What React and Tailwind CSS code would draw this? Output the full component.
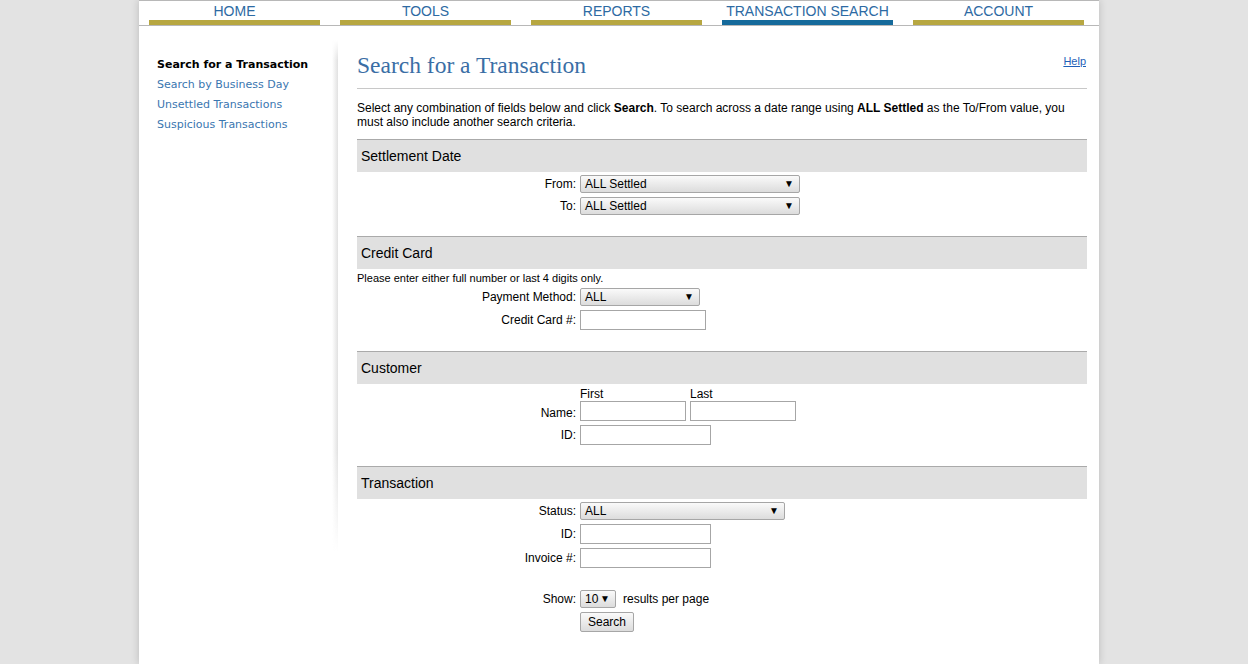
import React from 'react'

const navItems = ['HOME', 'TOOLS', 'REPORTS', 'TRANSACTION SEARCH', 'ACCOUNT']
const sideLinks = ['Search by Business Day', 'Unsettled Transactions', 'Suspicious Transactions']

function Select({ value, width }) {
  return (
    <div className={`${width} h-[18px] border border-[#a6a6a6] rounded-[2px] bg-gradient-to-b from-[#fafafa] to-[#dcdcdc] flex items-center justify-between pl-[4px] pr-[5px] text-[12px] text-black`}>
      <span>{value}</span>
      <span className="text-[10px] leading-none">▼</span>
    </div>
  )
}

function Input({ width }) {
  return <div className={`${width} h-[20px] border border-[#a6a6a6] bg-white`} />
}

function Row({ label, children }) {
  return (
    <div className="flex items-center">
      <div className="w-[223px] pr-[4px] text-right text-[12px] text-black">{label}</div>
      {children}
    </div>
  )
}

function SectionHead({ title }) {
  return (
    <div className="border-t border-[#aaaaaa] bg-[#e0e0e0] h-[33px] flex items-center pl-[4px] text-[14px] text-black">
      {title}
    </div>
  )
}

export default function App() {
  return (
    <div className="min-h-screen bg-[#e3e3e3] flex justify-center pr-[10px] font-['Liberation_Sans',Arial,sans-serif]">
      <div className="w-[960px] min-h-[664px] bg-white border-t border-[#b8b8b8] shadow-[0_0_8px_rgba(0,0,0,0.18)]">
        {/* top nav */}
        <div className="flex gap-[20px] pl-[10px] border-b border-[#b8b8b8]">
          {navItems.map((item) => (
            <div
              key={item}
              className={`w-[171px] h-[24px] pt-[1px] text-center text-[14px] leading-[18px] text-[#2d6aa3] border-b-[5px] ${item === 'TRANSACTION SEARCH' ? 'border-[#156a9b]' : 'border-[#b7a741]'}`}
            >
              {item}
            </div>
          ))}
        </div>

        <div className="flex">
          {/* sidebar */}
          <div className="w-[199px] flex">
            <div className="flex-1 pl-[18px] pt-[29px] font-['DejaVu_Sans',Verdana,sans-serif] text-[11px] leading-[20px]">
              <div className="font-bold text-black">Search for a Transaction</div>
              {sideLinks.map((l) => (
                <div key={l} className="text-[#3a76b0]">{l}</div>
              ))}
            </div>
            <div className="w-[6px] h-[512px] mt-[14px] bg-[linear-gradient(to_right,rgba(255,255,255,0),rgba(225,225,225,1))] [mask-image:linear-gradient(to_bottom,transparent,black_4%,black_80%,transparent)]" />
          </div>

          {/* main */}
          <div className="w-[730px] ml-[19px] pb-[30px]">
            <div className="flex justify-between items-start border-b border-[#c8c8c8] pt-[24px] pb-[8px]">
              <h1 className="font-['Liberation_Serif',Georgia,serif] text-[23.5px] leading-[30px] text-[#3a6ea5]">
                Search for a Transaction
              </h1>
              <a className="text-[11px] text-[#1f5fb8] underline pt-[3px] pr-[1px]">Help</a>
            </div>

            <p className="text-[12px] leading-[14px] text-black mt-[12px] mb-[10px]">
              Select any combination of fields below and click <b>Search</b>. To search across a date range using <b>ALL Settled</b> as the To/From value, you must also include another search criteria.
            </p>

            <SectionHead title="Settlement Date" />
            <div className="flex flex-col gap-[4px] pt-[3px] pb-[21px]">
              <Row label="From:"><Select value="ALL Settled" width="w-[220px]" /></Row>
              <Row label="To:"><Select value="ALL Settled" width="w-[220px]" /></Row>
            </div>

            <SectionHead title="Credit Card" />
            <div className="text-[11px] leading-[14px] text-black pt-[2px]">Please enter either full number or last 4 digits only.</div>
            <div className="flex flex-col gap-[4px] pt-[3px] pb-[21px]">
              <Row label="Payment Method:"><Select value="ALL" width="w-[120px]" /></Row>
              <Row label="Credit Card #:"><Input width="w-[126px]" /></Row>
            </div>

            <SectionHead title="Customer" />
            <div className="flex flex-col pt-[3px] pb-[21px]">
              <Row label="">
                <div className="w-[110px] text-[12px] leading-[14px]">First</div>
                <div className="text-[12px] leading-[14px]">Last</div>
              </Row>
              <div className="flex flex-col gap-[4px]">
                <Row label={<span className="relative top-[2px]">Name:</span>}>
                  <div className="flex gap-[4px]">
                    <Input width="w-[106px]" />
                    <Input width="w-[106px]" />
                  </div>
                </Row>
                <Row label="ID:"><Input width="w-[131px]" /></Row>
              </div>
            </div>

            <SectionHead title="Transaction" />
            <div className="flex flex-col gap-[4px] pt-[3px]">
              <Row label="Status:"><Select value="ALL" width="w-[205px]" /></Row>
              <Row label="ID:"><Input width="w-[131px]" /></Row>
              <Row label="Invoice #:"><Input width="w-[131px]" /></Row>
            </div>
            <div className="flex flex-col gap-[4px] pt-[22px]">
              <Row label="Show:">
                <Select value="10" width="w-[36px]" />
                <span className="ml-[7px] text-[12px] text-black">results per page</span>
              </Row>
              <Row label="">
                <button className="h-[20px] px-[7px] border border-[#a6a6a6] rounded-[2px] bg-gradient-to-b from-[#fafafa] to-[#dcdcdc] text-[12px] text-black">
                  Search
                </button>
              </Row>
            </div>
          </div>
        </div>
      </div>
    </div>
  )
}
